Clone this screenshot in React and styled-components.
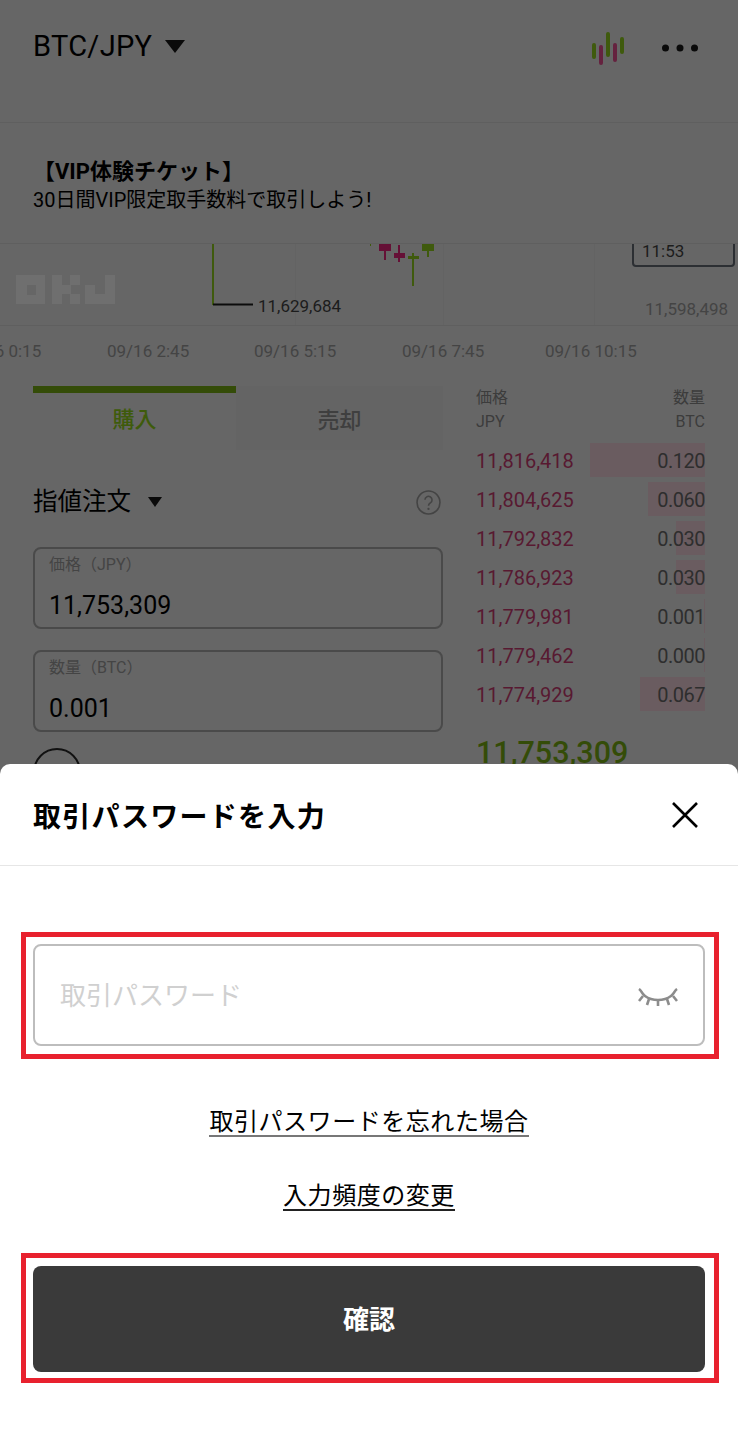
import React from 'react';
import styled, { createGlobalStyle } from 'styled-components';

const GlobalStyle = createGlobalStyle`
    html, body {
        margin: 0;
        padding: 0;
        background: #666;
    }
    * {
        box-sizing: border-box;
    }
`;

const Page = styled.div`
    position: relative;
    width: 738px;
    height: 1433px;
    overflow: hidden;
    background: #666;
    color: #000;
    font-family: Roboto, "Noto Sans CJK JP", sans-serif;
`;

const TopBar = styled.div`
    display: flex;
    align-items: center;
    justify-content: space-between;
    height: 123px;
    padding: 0 40px 26px 33px;
    border-bottom: 1px solid #5f5f5f;
`;

const Pair = styled.div`
    display: flex;
    align-items: center;
    gap: 13px;
    font-size: 29px;
    line-height: 34px;
    letter-spacing: 0.3px;
    margin-top: -4px;
`;

const TopIcons = styled.div`
    display: flex;
    align-items: center;
    gap: 36px;
`;

const Banner = styled.div`
    display: flex;
    flex-direction: column;
    justify-content: center;
    height: 121px;
    padding: 5px 33px 0;
    border-bottom: 1px solid #5f5f5f;
`;

const BannerTitle = styled.div`
    font-size: 22px;
    line-height: 29px;
    font-weight: 700;
`;

const BannerText = styled.div`
    font-size: 20px;
    line-height: 29px;
`;

const Chart = styled.div`
    position: relative;
    height: 82px;
    overflow: hidden;
    border-bottom: 1px solid #5f5f5f;
`;

const ChartLabel = styled.span`
    position: absolute;
    left: ${p => p.$left}px;
    top: ${p => p.$top}px;
    font-size: 17px;
    line-height: 20px;
    white-space: nowrap;
    color: ${p => p.$color || '#1c1c1c'};
`;

const PriceTag = styled.div`
    position: absolute;
    left: 632px;
    top: -20px;
    width: 103px;
    height: 43px;
    padding: 15px 0 0 8px;
    border: 2px solid #2c2f33;
    border-radius: 4px;
    font-size: 17px;
    line-height: 20px;
    color: #1c1c1c;
`;

const Axis = styled.div`
    position: relative;
    height: 52px;
    overflow: hidden;
`;

const Trade = styled.div`
    display: flex;
    gap: 33px;
    padding: 8px 33px 0;
`;

const OrderForm = styled.div`
    display: flex;
    flex-direction: column;
    width: 410px;
`;

const Tabs = styled.div`
    display: flex;
    height: 64px;
`;

const Tab = styled.div`
    display: flex;
    align-items: center;
    justify-content: center;
    width: ${p => (p.$active ? '203px' : '207px')};
    font-size: 22px;
    font-weight: 500;
    border-top: ${p => (p.$active ? '7px solid #344c08' : 'none')};
    color: ${p => (p.$active ? '#3e5b0b' : '#3f3f3f')};
    background: ${p => (p.$active ? 'transparent' : '#646464')};
    padding-bottom: ${p => (p.$active ? '10px' : '0')};
`;

const OrderType = styled.div`
    display: flex;
    align-items: center;
    justify-content: space-between;
    height: 34px;
    margin: 35px 2px 28px 0;
`;

const OrderName = styled.div`
    display: flex;
    align-items: center;
    gap: 17px;
    font-size: 24.5px;
    line-height: 34px;
`;

const Field = styled.div`
    display: flex;
    flex-direction: column;
    height: 82px;
    margin-bottom: 21px;
    padding: 5px 14px 0;
    border: 2px solid #4a4a4a;
    border-radius: 8px;
`;

const FieldLabel = styled.div`
    font-size: 16px;
    line-height: 22px;
    color: #444;
`;

const FieldValue = styled.div`
    margin-top: 15px;
    font-size: 25px;
    line-height: 30px;
`;

const Toggle = styled.div`
    width: 48px;
    height: 48px;
    margin-top: -5px;
    border: 2px solid #111;
    border-radius: 50%;
`;

const Book = styled.div`
    display: flex;
    flex-direction: column;
    width: 229px;
`;

const BookHead = styled.div`
    display: flex;
    justify-content: space-between;
    height: 55px;
    font-size: 16px;
    line-height: 24px;
    color: #3c3c3c;
`;

const RightText = styled.div`
    text-align: right;
`;

const BookRow = styled.div`
    position: relative;
    display: flex;
    align-items: center;
    justify-content: space-between;
    height: 39px;
    font-size: 20px;
`;

const DepthBar = styled.div`
    position: absolute;
    right: 0;
    top: 2px;
    bottom: 3px;
    background: #6a5c60;
`;

const BookPrice = styled.span`
    position: relative;
    color: #581931;
`;

const BookSize = styled.span`
    position: relative;
    letter-spacing: -0.5px;
    color: #2e2e2e;
`;

const LastPrice = styled.div`
    margin-top: 21px;
    font-size: 30.5px;
    line-height: 36px;
    font-weight: 500;
    color: #344c08;
`;

const Sheet = styled.div`
    position: absolute;
    left: 0;
    right: 0;
    bottom: 0;
    display: flex;
    flex-direction: column;
    height: 669px;
    background: #fff;
    border-radius: 10px 10px 0 0;
`;

const SheetHead = styled.div`
    display: flex;
    align-items: center;
    justify-content: space-between;
    height: 102px;
    padding: 0 39px 0 33px;
    border-bottom: 1px solid #e6e6e6;
`;

const SheetTitle = styled.div`
    font-size: 28px;
    font-weight: 700;
    letter-spacing: 1.3px;
`;

const Highlight = styled.div`
    margin: ${p => p.$top}px 19px 0 21px;
    padding: ${p => p.$padTop}px 9px ${p => p.$padBottom}px 7px;
    border: 5px solid #e8212e;
`;

const PasswordBox = styled.div`
    display: flex;
    align-items: center;
    justify-content: space-between;
    height: 102px;
    padding: 0 25px;
    border: 2px solid #bdbdbd;
    border-radius: 8px;
`;

const Placeholder = styled.div`
    margin-top: -4px;
    font-size: 26px;
    color: #d0d0d0;
`;

const EyeWrap = styled.div`
    display: flex;
    margin-top: 6px;
`;

const Links = styled.div`
    display: flex;
    flex-direction: column;
    align-items: center;
    gap: 44px;
    margin-top: 48px;
`;

const TextLink = styled.a`
    padding-top: 2px;
    font-size: 24px;
    line-height: 26px;
    letter-spacing: 0.55px;
    color: #000;
    border-bottom: 2px solid ${p => p.$line || '#222'};
`;

const ConfirmButton = styled.button`
    display: block;
    width: 100%;
    height: 106px;
    padding: 0 0 3px;
    border: none;
    border-radius: 8px;
    background: #3a3a3a;
    color: #fff;
    font-family: inherit;
    font-size: 26px;
    font-weight: 700;
`;

const asks = [
    { price: '11,816,418', size: '0.120', depth: 115 },
    { price: '11,804,625', size: '0.060', depth: 57 },
    { price: '11,792,832', size: '0.030', depth: 29 },
    { price: '11,786,923', size: '0.030', depth: 29 },
    { price: '11,779,981', size: '0.001', depth: 1 },
    { price: '11,779,462', size: '0.000', depth: 1 },
    { price: '11,774,929', size: '0.067', depth: 65 },
];

const axisLabels = [
    { text: '09/16 0:15', left: -41 },
    { text: '09/16 2:45', left: 107 },
    { text: '09/16 5:15', left: 254 },
    { text: '09/16 7:45', left: 402 },
    { text: '09/16 10:15', left: 545 },
];

const Caret = ({ width, height }) => (
    <svg width={width} height={height} viewBox="0 0 20 14" preserveAspectRatio="none">
        <path d="M0 0h20L10 14z" fill="#0a0a0a" />
    </svg>
);

const CandleIcon = () => (
    <svg width="36" height="36" viewBox="0 0 36 36">
        <g strokeWidth="4" strokeLinecap="round">
            <path d="M4 15v12M18 4v21M32 9v13" stroke="#3f5a0d" />
            <path d="M11 17v16M25 15v15" stroke="#65223f" />
        </g>
    </svg>
);

const DotsIcon = () => (
    <svg width="36" height="8" viewBox="0 0 36 8">
        <circle cx="3.5" cy="4" r="3.5" fill="#0a0a0a" />
        <circle cx="18" cy="4" r="3.5" fill="#0a0a0a" />
        <circle cx="32.5" cy="4" r="3.5" fill="#0a0a0a" />
    </svg>
);

const HelpIcon = () => (
    <svg width="25" height="25" viewBox="0 0 24 24" fill="none">
        <circle cx="12" cy="12" r="11" stroke="#444" strokeWidth="1.5" />
        <path d="M8.6 9.4a3.4 3.4 0 1 1 5.4 2.8c-1.3.9-2 1.5-2 3" stroke="#444" strokeWidth="1.5" />
        <circle cx="12" cy="18.2" r="1.1" fill="#444" />
    </svg>
);

const CloseIcon = () => (
    <svg width="28" height="28" viewBox="0 0 28 28">
        <path d="M2 2l24 24M26 2L2 26" stroke="#000" strokeWidth="2.6" />
    </svg>
);

const EyeIcon = () => (
    <svg width="40" height="20" viewBox="0 0 40 20" fill="none" stroke="#8c8c8c" strokeWidth="2.6">
        <path d="M1 1c3 2 2 4 6 7 4 3 8 4 13 4s9-1 13-4c4-3 3-5 6-7" />
        <path d="M5 8l-4 5M35 8l4 5M11 11l-2 6M20 12v6M29 11l2 6" />
    </svg>
);

// chart drawing is pinned to the chart's own coordinates, y starts at 244
const ChartDrawing = () => (
    <svg width="738" height="81" viewBox="0 244 738 81" style={{ display: 'block' }}>
        <path d="M295.5 244v81M443.5 244v81M594.5 244v81" stroke="#636363" />
        <g fill="#6f6f6f">
            <path d="M16 275h29v29H16zM27 285v10h9v-10z" fillRule="evenodd" />
            <path d="M52 275h10v10h8v-10h10v10h-9v9h9v10H70v-10h-8v10H52z" />
            <path d="M105 275h10v29H85v-19h10v9h10z" />
        </g>
        <path d="M213 244v61" stroke="#3f5a0d" strokeWidth="2" />
        <path d="M213 304.5h40" stroke="#0c0c0c" strokeWidth="2" />
        <rect x="370" y="244" width="1" height="2" fill="#3f5a0d" />
        <g fill="#651036">
            <rect x="379" y="244" width="12" height="7" />
            <rect x="384" y="244" width="2" height="16" />
            <rect x="394" y="253" width="11" height="5" />
            <rect x="398" y="245" width="2" height="17" />
        </g>
        <g fill="#3f5a0d">
            <rect x="408" y="256" width="11" height="3" />
            <rect x="412" y="253" width="2" height="33" />
            <rect x="422" y="244" width="12" height="7" />
            <rect x="427" y="244" width="2" height="13" />
        </g>
    </svg>
);

const App = () => (
    <Page>
        <GlobalStyle />
        <TopBar>
            <Pair>
                BTC/JPY
                <Caret width={20} height={13} />
            </Pair>
            <TopIcons>
                <CandleIcon />
                <DotsIcon />
            </TopIcons>
        </TopBar>
        <Banner>
            <BannerTitle>【VIP体験チケット】</BannerTitle>
            <BannerText>30日間VIP限定取手数料で取引しよう!</BannerText>
        </Banner>
        <Chart>
            <ChartDrawing />
            <PriceTag>11:53</PriceTag>
            <ChartLabel $left={258} $top={52}>11,629,684</ChartLabel>
            <ChartLabel $left={645} $top={55} $color="#444">11,598,498</ChartLabel>
        </Chart>
        <Axis>
            {axisLabels.map(label => (
                <ChartLabel key={label.text} $left={label.left} $top={15} $color="#444">
                    {label.text}
                </ChartLabel>
            ))}
        </Axis>
        <Trade>
            <OrderForm>
                <Tabs>
                    <Tab $active>購入</Tab>
                    <Tab>売却</Tab>
                </Tabs>
                <OrderType>
                    <OrderName>
                        指値注文
                        <Caret width={14} height={10} />
                    </OrderName>
                    <HelpIcon />
                </OrderType>
                <Field>
                    <FieldLabel>価格（JPY）</FieldLabel>
                    <FieldValue>11,753,309</FieldValue>
                </Field>
                <Field>
                    <FieldLabel>数量（BTC）</FieldLabel>
                    <FieldValue>0.001</FieldValue>
                </Field>
                <Toggle />
            </OrderForm>
            <Book>
                <BookHead>
                    <div>価格<br />JPY</div>
                    <RightText>数量<br />BTC</RightText>
                </BookHead>
                {asks.map(row => (
                    <BookRow key={row.price}>
                        <DepthBar style={{ width: row.depth }} />
                        <BookPrice>{row.price}</BookPrice>
                        <BookSize>{row.size}</BookSize>
                    </BookRow>
                ))}
                <LastPrice>11,753,309</LastPrice>
            </Book>
        </Trade>
        <Sheet>
            <SheetHead>
                <SheetTitle>取引パスワードを入力</SheetTitle>
                <CloseIcon />
            </SheetHead>
            <Highlight $top={66} $padTop={7} $padBottom={8}>
                <PasswordBox>
                    <Placeholder>取引パスワード</Placeholder>
                    <EyeWrap>
                        <EyeIcon />
                    </EyeWrap>
                </PasswordBox>
            </Highlight>
            <Links>
                <TextLink $line="#777">取引パスワードを忘れた場合</TextLink>
                <TextLink>入力頻度の変更</TextLink>
            </Links>
            <Highlight $top={42} $padTop={8} $padBottom={6}>
                <ConfirmButton>確認</ConfirmButton>
            </Highlight>
        </Sheet>
    </Page>
);

export default App;
